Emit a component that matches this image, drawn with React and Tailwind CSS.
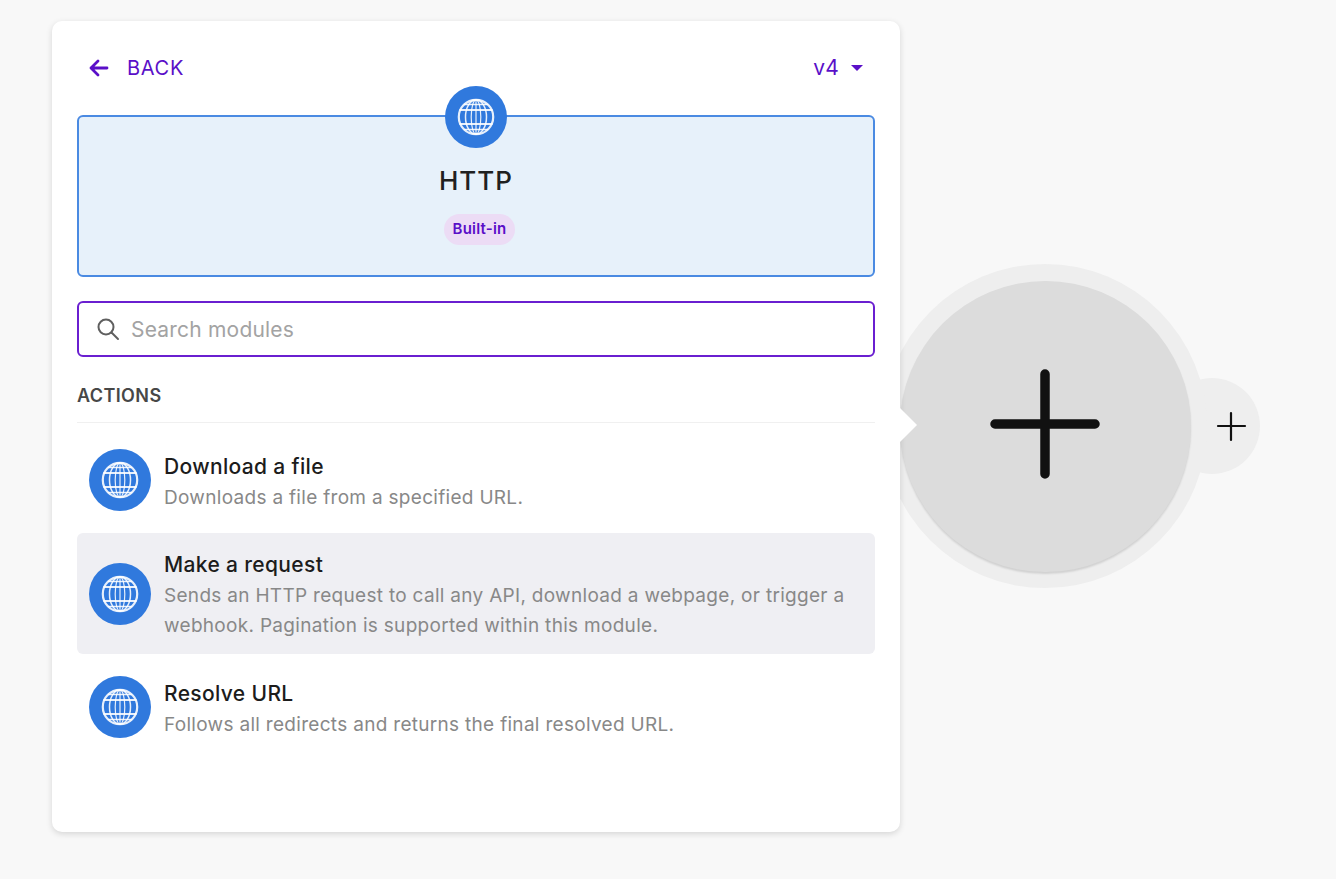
import React from "react";

function Globe({ size = 62 }) {
  return (
    <div className="rounded-full bg-[#3079dd] flex items-center justify-center shrink-0" style={{ width: size, height: size }}>
      <svg width="38" height="38" viewBox="0 0 38 38" fill="none" stroke="#ffffff" strokeOpacity="0.88" strokeWidth="1.5">
        <circle cx="19" cy="19" r="17.2" strokeWidth="2.2" />
        <ellipse cx="19" cy="19" rx="10.5" ry="17.2" />
        <ellipse cx="19" cy="19" rx="4.8" ry="17.2" strokeWidth="1.2" />
        <path d="M19 2v34" strokeWidth="1.2" />
        <path d="M2.5 12h33M2.5 26h33" strokeWidth="2" />
        <path d="M7 6.5h24M7 31.5h24" strokeWidth="1.3" />
      </svg>
    </div>
  );
}

function Row({ title, lines, active }) {
  return (
    <div className={`flex items-center rounded-[6px] pl-3 pr-3 ${active ? "bg-[#efeff3] h-[121px]" : "h-[62px]"}`}>
      <Globe />
      <div className="ml-[13px] min-w-0 pt-[5px]">
        <div className={`text-[21px] leading-[30px] mb-[1px] font-[550] tracking-[0.35px] text-[#1c1c1c] ${active ? "-mt-[2px]" : ""}`}>{title}</div>
        {lines.map((l) => (
          <div key={l} className="text-[19px] leading-[30px] tracking-[0.3px] text-[#888888] whitespace-nowrap">{l}</div>
        ))}
      </div>
    </div>
  );
}

export default function App() {
  return (
    <div className="relative w-[1336px] h-[879px] overflow-hidden bg-[#f8f8f8] pt-[21px] pl-[52px] font-['Inter',sans-serif]">
      {/* canvas module bubbles */}
      <div className="absolute left-[1164px] top-[378px] w-[96px] h-[96px] rounded-full bg-[#eeeeee]" />
      <div className="absolute left-[883px] top-[264px] w-[324px] h-[324px] rounded-full bg-[#eeeeee]" />
      <div className="absolute left-[900px] top-[281px] w-[291px] h-[291px] rounded-full bg-[#dcdcdc] shadow-[0_2px_2px_rgba(0,0,0,0.12)]" />
      <svg className="absolute left-[985px] top-[364px]" width="120" height="120" viewBox="0 0 120 120">
        <path d="M60 10v100M10 60h100" stroke="#111111" strokeWidth="9.5" strokeLinecap="round" />
      </svg>
      <svg className="absolute left-[1215px] top-[410px]" width="32" height="32" viewBox="0 0 32 32">
        <path d="M16 3v27M3 16h27" stroke="#111111" strokeWidth="2.2" strokeLinecap="round" />
      </svg>

      {/* panel */}
      <div className="relative w-[848px] h-[811px] rounded-[10px] bg-white shadow-[0_2px_6px_rgba(0,0,0,0.14)] px-[25px]">
        <div className="absolute left-[848px] top-[387px] w-0 h-0 border-y-[17px] border-y-transparent border-l-[17px] border-l-white" />

        <div className="flex items-center justify-between h-[94px] pl-[11px] pr-[12px] text-[#5a0fc8]">
          <div className="flex items-center">
            <svg width="22" height="22" viewBox="0 0 22 22" fill="none" stroke="#5a0fc8" strokeWidth="2.8" strokeLinecap="round" strokeLinejoin="round">
              <path d="M3 11h16M10 4l-7 7 7 7" />
            </svg>
            <span className="ml-[17px] text-[20px] tracking-[0.7px]">BACK</span>
          </div>
          <div className="flex items-center">
            <span className="text-[21px] tracking-[0.2px]">v4</span>
            <span className="ml-[12px] w-0 h-0 border-x-[6px] border-x-transparent border-t-[6px] border-t-[#5a0fc8]" />
          </div>
        </div>

        <div className="relative h-[162px] rounded-[6px] border-2 border-[#4a8ae2] bg-[#e7f1fa] flex flex-col items-center">
          <div className="absolute -top-[31px] left-1/2 -translate-x-1/2">
            <Globe />
          </div>
          <div className="mt-[46px] text-[26px] leading-[36px] font-[550] text-[#202020] tracking-[1px]">HTTP</div>
          <div className="mt-[15px] ml-[7px] h-[31px] px-[9px] rounded-full bg-[#ecdcf5] text-[#5a0fc8] text-[15px] tracking-[0.2px] font-semibold flex items-center">Built-in</div>
        </div>

        <div className="mt-[24px] h-[56px] rounded-[6px] border-2 border-[#6a1fd0] flex items-center pl-[17px]">
          <svg width="24" height="24" viewBox="0 0 24 24" fill="none" stroke="#5f5f5f" strokeWidth="2" strokeLinecap="round">
            <circle cx="10" cy="10" r="7.5" />
            <path d="M15.5 15.5L22 22" />
          </svg>
          <span className="ml-[11px] pt-[2px] text-[21px] tracking-[0.2px] text-[#a3a3a3]">Search modules</span>
        </div>

        <div className="mt-[27px] h-[39px] border-b border-[#f0f0f0] text-[18px] leading-[24px] font-semibold tracking-[0.4px] text-[#474747]">ACTIONS</div>

        <div className="flex flex-col">
          <div className="pt-[26px]"><Row title="Download a file" lines={["Downloads a file from a specified URL."]} /></div>
          <div className="pt-[22px]"><Row active title="Make a request" lines={["Sends an HTTP request to call any API, download a webpage, or trigger a", "webhook. Pagination is supported within this module."]} /></div>
          <div className="pt-[22px]"><Row title="Resolve URL" lines={["Follows all redirects and returns the final resolved URL."]} /></div>
        </div>
      </div>
    </div>
  );
}
